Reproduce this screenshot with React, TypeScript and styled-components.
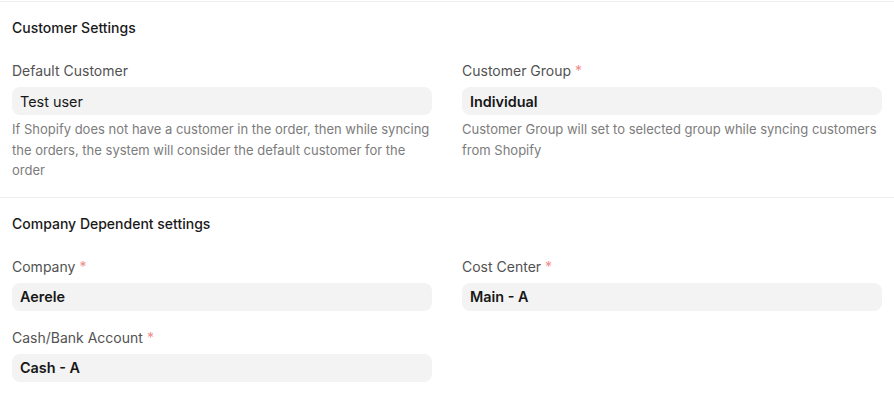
import React from "react";
import styled, { createGlobalStyle } from "styled-components";

const Global = createGlobalStyle`
  html, body { margin: 0; padding: 0; background: #ffffff; }
  body { font-family: Inter, "Noto Sans", sans-serif; -webkit-font-smoothing: antialiased; }
  * { box-sizing: border-box; }
`;

const Page = styled.div`
  width: 894px;
  padding-top: 1px;
  background: #fff;
`;

const Section = styled.section`
  border-top: 1px solid #ededed;
  padding: 16px 12px;
`;

const Heading = styled.div`
  font-size: 14px;
  line-height: 20px;
  font-weight: 500;
  color: #1a1a1a;
  margin-bottom: 23px;
`;

const Grid = styled.div`
  display: grid;
  grid-template-columns: 420px 420px;
  column-gap: 30px;
`;

const Column = styled.div`
  display: flex;
  flex-direction: column;
  gap: 17px;
`;

const Field = styled.div`
  display: flex;
  flex-direction: column;
`;

const Label = styled.label`
  font-size: 14px;
  line-height: 20px;
  color: #525252;
  margin-bottom: 6px;
`;

const Req = styled.span`
  color: #f08c8c;
  margin-left: 4px;
`;

const Input = styled.div<{ $bold?: boolean }>`
  height: 28px;
  border-radius: 8px;
  background: #f3f3f3;
  padding: 0 8px;
  display: flex;
  align-items: center;
  font-size: 14.4px;
  color: #171717;
  font-weight: ${(p) => (p.$bold ? 600 : 400)};
`;

const Help = styled.div`
  font-size: 13px;
  line-height: 20.5px;
  color: #7c7c7c;
  margin-top: 4px;
`;

type F = { label: string; value: string; req?: boolean; bold?: boolean; help?: string };

const FieldView = ({ f }: { f: F }) => (
  <Field>
    <Label>
      {f.label}
      {f.req && <Req>*</Req>}
    </Label>
    <Input $bold={f.bold}>{f.value}</Input>
    {f.help && <Help>{f.help}</Help>}
  </Field>
);

export default function App() {
  return (
    <Page>
      <Global />
      <Section>
        <Heading>Customer Settings</Heading>
        <Grid>
          <Column>
            <FieldView
              f={{
                label: "Default Customer",
                value: "Test user",
                help:
                  "If Shopify does not have a customer in the order, then while syncing the orders, the system will consider the default customer for the order",
              }}
            />
          </Column>
          <Column>
            <FieldView
              f={{
                label: "Customer Group",
                value: "Individual",
                req: true,
                bold: true,
                help: "Customer Group will set to selected group while syncing customers from Shopify",
              }}
            />
          </Column>
        </Grid>
      </Section>
      <Section>
        <Heading>Company Dependent settings</Heading>
        <Grid>
          <Column>
            <FieldView f={{ label: "Company", value: "Aerele", req: true, bold: true }} />
            <FieldView f={{ label: "Cash/Bank Account", value: "Cash - A", req: true, bold: true }} />
          </Column>
          <Column>
            <FieldView f={{ label: "Cost Center", value: "Main - A", req: true, bold: true }} />
          </Column>
        </Grid>
      </Section>
    </Page>
  );
}
